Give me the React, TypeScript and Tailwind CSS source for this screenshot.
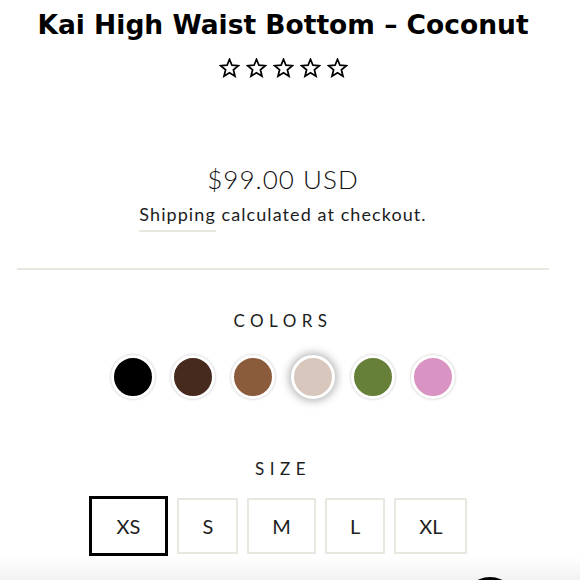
import React from 'react';

const COLORS = [
    { name: 'Black', hex: '#000000' },
    { name: 'Chocolate', hex: '#472a1e' },
    { name: 'Caramel', hex: '#8b5c3b' },
    { name: 'Coconut', hex: '#d8c7bc' },
    { name: 'Olive', hex: '#66803a' },
    { name: 'Orchid', hex: '#da94c3' },
];

const SIZES = ['XS', 'S', 'M', 'L', 'XL'];

const StarOutline: React.FC = () => (
    <svg width="21" height="20" viewBox="0 0 24 23" fill="none" stroke="black" strokeWidth="2" strokeLinejoin="miter">
        <polygon points="12,1.5 14.8,8.3 22.2,8.8 16.5,13.6 18.3,20.9 12,17 5.7,20.9 7.5,13.6 1.8,8.8 9.2,8.3" />
    </svg>
);

const App: React.FC = () => {
    const selectedColor = 'Coconut';
    const selectedSize = 'XS';

    return (
        <div className="relative w-[580px] h-[580px] overflow-hidden bg-white text-[#1c1d1d] font-['Lato','Noto_Sans',sans-serif]">
            <div className="w-[566px]">
                {/* Title */}
                <h1 className="pt-[9px] text-center text-[26.5px] leading-[32px] font-bold text-black font-['DejaVu_Sans',sans-serif]">
                    Kai High Waist Bottom – Coconut
                </h1>

                {/* Rating */}
                <div className="mt-[17px] flex justify-center gap-[6px]">
                    {[0, 1, 2, 3, 4].map((i) => (
                        <StarOutline key={i} />
                    ))}
                </div>

                {/* Price */}
                <div className="mt-[86px] text-center text-[26px] leading-[30px] font-light tracking-[0.04em] text-[#111]">$99.00 USD</div>
                <div className="mt-[8px] text-center text-[18px] leading-[24px] tracking-[0.06em]">
                    <span className="border-b-2 border-[#e8e8e1] pb-[5px]">Shipping</span> calculated at checkout.
                </div>

                {/* Divider */}
                <div className="mx-[17px] mt-[42px] h-[2px] bg-[#e8e8e1]" />

                {/* Colors */}
                <div className="mt-[41px] text-center text-[17px] leading-[20px] tracking-[0.32em]">COLORS</div>
                <div className="mt-[24px] flex justify-center gap-[16px]">
                    {COLORS.map((c) => (
                        <button
                            key={c.name}
                            title={c.name}
                            className={`w-[44px] h-[44px] rounded-full border-[3px] border-white ${
                                c.name === selectedColor
                                    ? 'shadow-[0_0_8px_2px_rgba(0,0,0,0.3)]'
                                    : 'shadow-[0_0_3px_rgba(0,0,0,0.25)]'
                            }`}
                            style={{ backgroundColor: c.hex }}
                        />
                    ))}
                </div>

                {/* Sizes */}
                <div className="mt-[60px] text-center text-[17px] leading-[20px] tracking-[0.32em]">SIZE</div>
                <div className="mt-[17px] flex justify-center items-center gap-[9px] pr-[10px]">
                    {SIZES.map((s) => (
                        <button
                            key={s}
                            className={`text-[20px] ${
                                s === selectedSize
                                    ? 'h-[60px] px-[25px] border-[3px] border-black'
                                    : 'h-[56px] px-[23px] border-2 border-[#e8e8e1]'
                            }`}
                        >
                            {s}
                        </button>
                    ))}
                </div>
            </div>

            {/* Bottom fade + chat button */}
            <div className="pointer-events-none absolute left-0 right-0 bottom-0 h-[24px] bg-gradient-to-b from-white/0 to-[#f3f3f3]" />
            <div className="absolute left-[462px] top-[577px] w-[56px] h-[56px] rounded-full bg-black" />
        </div>
    );
};

export default App;
